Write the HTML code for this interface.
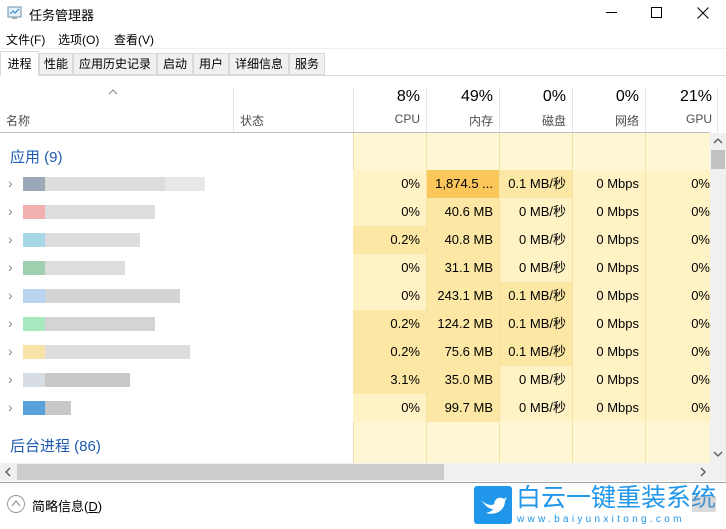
<!DOCTYPE html>
<html><head><meta charset="utf-8"><style>
*{margin:0;padding:0;box-sizing:border-box}
body{width:726px;height:529px;overflow:hidden;background:#fff;position:relative;font-family:"Liberation Sans","Noto Sans CJK SC",sans-serif;font-size:12px;color:#000}
.a{position:absolute;white-space:nowrap}
.tab{position:absolute;top:53px;height:22px;background:#f0f0f0;border:1px solid #d9d9d9;font-size:12px;line-height:20px;text-align:center;color:#000}
.hdr{color:#4d4d4d;font-size:12px}
.big{font-size:16px;color:#000;text-align:right}
.cell{position:absolute;height:28px;line-height:28px;text-align:right;padding-right:6px;font-size:13px;color:#000;white-space:nowrap}
.vl{position:absolute;top:133px;width:1px;height:330px;background:#f1e2a8}
.blk{position:absolute;height:14px}
.chev{position:absolute;left:8px;color:#888;font-size:14px}
</style></head><body>
<svg class="a" style="left:7px;top:6px" width="16" height="14"><rect x="1" y="1" width="13" height="10" fill="#e8f1fa" stroke="#6b8ea8"/><polyline points="3,8 6,5 8,7 12,3" fill="none" stroke="#3b8fd0" stroke-width="1.2"/><rect x="5" y="11" width="5" height="2" fill="#9aa"/></svg>
<div class="a" style="left:29px;top:5px;font-size:13px">任务管理器</div>
<div class="a" style="left:606px;top:12px;width:11px;height:1px;background:#000"></div>
<div class="a" style="left:651px;top:7px;width:11px;height:11px;border:1px solid #000"></div>
<svg class="a" style="left:697px;top:7px" width="12" height="12"><path d="M0.5 0.5L11.5 11.5M11.5 0.5L0.5 11.5" stroke="#000" stroke-width="1"/></svg>
<div class="a" style="left:6px;top:31px;font-size:12px">文件(F)</div>
<div class="a" style="left:58px;top:31px;font-size:12px">选项(O)</div>
<div class="a" style="left:114px;top:31px;font-size:12px">查看(V)</div>
<div class="a" style="left:0;top:48px;width:726px;height:1px;background:#f0f0f0"></div>
<div class="a" style="left:0;top:75px;width:726px;height:1px;background:#d9d9d9"></div>
<div class="a" style="left:0;top:51px;width:39px;height:25px;background:#fff;border:1px solid #d9d9d9;border-bottom:none;font-size:12px;line-height:24px;text-align:center">进程</div>
<div class="tab" style="left:39px;width:34px">性能</div>
<div class="tab" style="left:73px;width:84px">应用历史记录</div>
<div class="tab" style="left:157px;width:36px">启动</div>
<div class="tab" style="left:193px;width:36px">用户</div>
<div class="tab" style="left:229px;width:60px">详细信息</div>
<div class="tab" style="left:289px;width:36px">服务</div>
<svg class="a" style="left:108px;top:89px" width="10" height="6"><path d="M1 5L5 1L9 5" fill="none" stroke="#888"/></svg>
<div class="a hdr" style="left:6px;top:112px">名称</div>
<div class="a" style="left:233px;top:88px;width:1px;height:44px;background:#e5e5e5"></div>
<div class="a hdr" style="left:240px;top:112px">状态</div>
<div class="a" style="left:353px;top:88px;width:1px;height:44px;background:#e5e5e5"></div>
<div class="a" style="left:426px;top:88px;width:1px;height:44px;background:#e5e5e5"></div>
<div class="a" style="left:499px;top:88px;width:1px;height:44px;background:#e5e5e5"></div>
<div class="a" style="left:572px;top:88px;width:1px;height:44px;background:#e5e5e5"></div>
<div class="a" style="left:645px;top:88px;width:1px;height:44px;background:#e5e5e5"></div>
<div class="a" style="left:717px;top:88px;width:1px;height:44px;background:#e5e5e5"></div>
<div class="a big" style="left:353px;top:88px;width:67px">8%</div>
<div class="a big" style="left:426px;top:88px;width:67px">49%</div>
<div class="a big" style="left:499px;top:88px;width:67px">0%</div>
<div class="a big" style="left:572px;top:88px;width:67px">0%</div>
<div class="a big" style="left:645px;top:88px;width:67px">21%</div>
<div class="a hdr" style="left:353px;top:112px;width:67px;text-align:right">CPU</div>
<div class="a hdr" style="left:426px;top:112px;width:67px;text-align:right">内存</div>
<div class="a hdr" style="left:499px;top:112px;width:67px;text-align:right">磁盘</div>
<div class="a hdr" style="left:572px;top:112px;width:67px;text-align:right">网络</div>
<div class="a hdr" style="left:645px;top:112px;width:67px;text-align:right">GPU</div>
<div class="a" style="left:0;top:132px;width:710px;height:1px;background:#bfbfbf"></div>
<div class="a" style="left:353px;top:133px;width:357px;height:330px;background:#fff6d3"></div>
<div class="a" style="left:353px;top:170px;width:357px;height:252px;background:#fff3c6"></div>
<div class="vl" style="left:353px"></div><div class="vl" style="left:426px"></div><div class="vl" style="left:499px"></div><div class="vl" style="left:572px"></div><div class="vl" style="left:645px"></div>
<div class="a" style="left:10px;top:146px;font-size:15px;color:#1e5bb0">应用 (9)</div>
<div class="a" style="left:10px;top:435px;font-size:15px;color:#1e5bb0">后台进程 (86)</div>
<div id="rows"></div>
<div class="a" style="left:710px;top:133px;width:16px;height:330px;background:#f0f0f0"></div>
<svg class="a" style="left:713px;top:138px" width="10" height="6"><path d="M1 5L5 1L9 5" fill="none" stroke="#555" stroke-width="1.3"/></svg>
<div class="a" style="left:711px;top:150px;width:14px;height:19px;background:#c2c2c2"></div>
<svg class="a" style="left:713px;top:451px" width="10" height="6"><path d="M1 1L5 5L9 1" fill="none" stroke="#555" stroke-width="1.3"/></svg>
<div class="a" style="left:0;top:463px;width:726px;height:18px;background:#f0f0f0"></div>
<div class="a" style="left:17px;top:464px;width:427px;height:16px;background:#cdcdcd"></div>
<svg class="a" style="left:5px;top:467px" width="6" height="10"><path d="M5 1L1 5L5 9" fill="none" stroke="#555" stroke-width="1.3"/></svg>
<svg class="a" style="left:700px;top:467px" width="6" height="10"><path d="M1 1L5 5L1 9" fill="none" stroke="#555" stroke-width="1.3"/></svg>
<div class="a" style="left:0;top:482px;width:726px;height:1px;background:#a0a0a0"></div>
<div class="a" style="left:7px;top:495px;width:18px;height:18px;border:1px solid #999;border-radius:50%"></div>
<svg class="a" style="left:11px;top:500px" width="10" height="7"><path d="M1 6L5 1L9 6" fill="none" stroke="#777"/></svg>
<div class="a" style="left:32px;top:496px;font-size:13px">简略信息(<u>D</u>)</div>
<div class="a" style="left:474px;top:486px;width:38px;height:38px;background:#1f96ea;border-radius:3px"></div>
<svg class="a" style="left:478px;top:492px" width="30" height="26"><path d="M3 8C8 13 14 14 16 12C17 6 22 4 26 7L29 5L27 9C27 18 18 24 8 21C12 20 14 19 15 17C10 17 7 13 3 8Z" fill="#fff"/></svg>
<div class="a" style="left:516px;top:483px;font-size:25px;line-height:30px;color:#1f96ea;letter-spacing:0px">白云一键重装系统</div>
<div class="a" style="left:692px;top:496px;width:24px;height:16px;background:rgba(150,150,150,0.35)"></div>
<div class="a" style="left:517px;top:514px;font-size:10px;color:#1f96ea;letter-spacing:3.3px">www.baiyunxitong.com</div>
<script>
var d=[["0%","1,874.5 ...","0.1 MB/秒",0,2,1],["0%","40.6 MB","0 MB/秒",0,1,0],["0.2%","40.8 MB","0 MB/秒",1,1,0],["0%","31.1 MB","0 MB/秒",0,1,0],["0%","243.1 MB","0.1 MB/秒",0,1,1],["0.2%","124.2 MB","0.1 MB/秒",1,1,1],["0.2%","75.6 MB","0.1 MB/秒",1,1,1],["3.1%","35.0 MB","0 MB/秒",1,1,0],["0%","99.7 MB","0 MB/秒",0,1,0]];
var col=["#fff3c6","#fce8a4","#fbc65a"];
var names=[[["#9aa8b8",22],["#ddd",120],["#e8e8e8",40]],[["#f0b0b0",22],["#ddd",110]],[["#a8d8e8",22],["#ddd",95]],[["#9fd0b0",22],["#ddd",80]],[["#b8d4f0",22],["#d4d4d4",135]],[["#a8e8c0",22],["#d4d4d4",110]],[["#f8e4a8",22],["#ddd",145]],[["#d8dde4",22],["#c8c8c8",85]],[["#5aa0dc",22],["#c8c8c8",26]]];
var h="";
d.forEach(function(r,i){var y=170+i*28;
h+='<div class="chev" style="top:'+(y+5)+'px">›</div>';
var x=23;names[i].forEach(function(b){h+='<div class="blk" style="left:'+x+'px;top:'+(y+7)+'px;width:'+b[1]+'px;background:'+b[0]+'"></div>';x+=b[1];});
h+='<div class="cell" style="left:353px;top:'+y+'px;width:73px;background:'+(r[3]?col[1]:col[0])+'">'+r[0]+'</div>';
h+='<div class="cell" style="left:427px;top:'+y+'px;width:72px;background:'+col[r[4]]+'">'+r[1]+'</div>';
h+='<div class="cell" style="left:500px;top:'+y+'px;width:72px;background:'+(r[5]?col[1]:col[0])+'">'+r[2]+'</div>';
h+='<div class="cell" style="left:573px;top:'+y+'px;width:72px">0 Mbps</div>';
h+='<div class="cell" style="left:646px;top:'+y+'px;width:64px;padding-right:0">0%</div>';});
document.getElementById("rows").innerHTML=h;
</script>
</body></html>
